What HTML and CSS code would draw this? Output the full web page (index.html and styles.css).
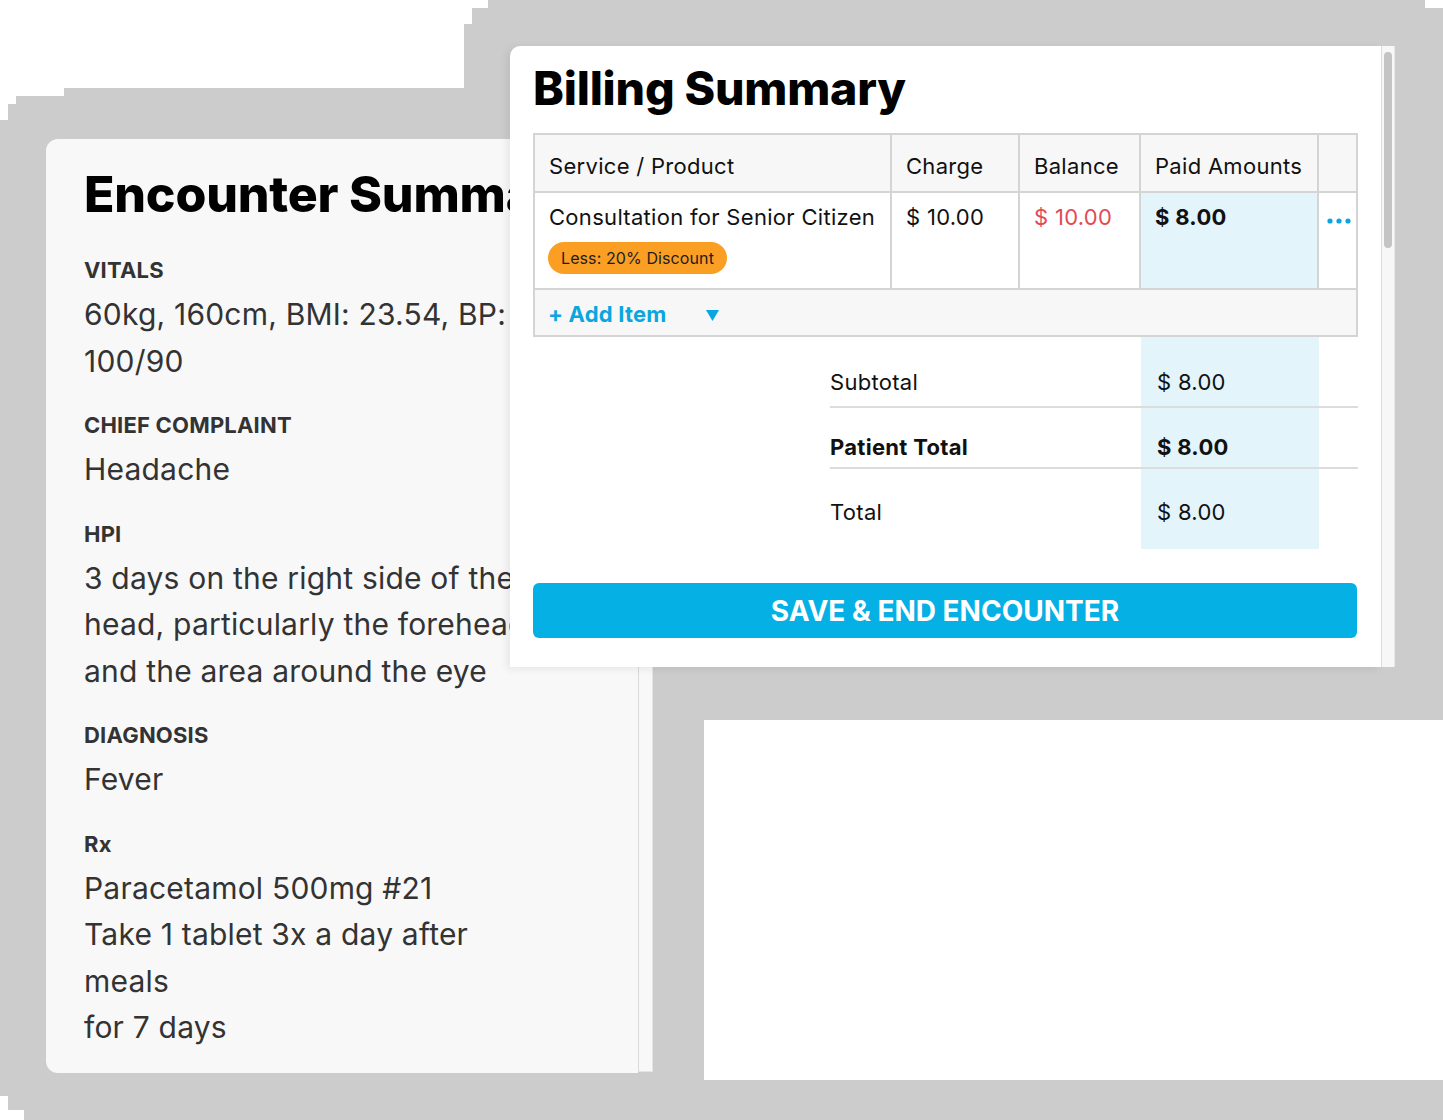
FILE: index.html
```html
<!DOCTYPE html>
<html lang="en">
<head>
<meta charset="utf-8">
<title>Encounter &amp; Billing Summary</title>
<link rel="stylesheet" href="styles.css">
</head>
<body>
<div class="stage">
  <svg class="backdrop" width="1443" height="1120" viewBox="0 0 1443 1120" aria-hidden="true">
    <polygon fill="#cccccc" points="488,0 1425,0 1425,8 1443,8 1443,720 704,720 704,1080 1443,1080 1443,1120 24,1120 24,1110 8,1110 8,1096 0,1096 0,120 8,120 8,104 16,104 16,96 64,96 64,88 464,88 464,24 472,24 472,8 488,8"/>
  </svg>

  <section class="card encounter">
    <div class="encounter-body">
      <h1 class="title">Encounter Summary</h1>
      <div class="field">
        <h2 class="label">VITALS</h2>
        <p class="value">60kg, 160cm, BMI: 23.54, BP: 100/90</p>
      </div>
      <div class="field">
        <h2 class="label">CHIEF COMPLAINT</h2>
        <p class="value">Headache</p>
      </div>
      <div class="field">
        <h2 class="label">HPI</h2>
        <p class="value">3 days on the right side of the head, particularly the forehead and the area around the eye</p>
      </div>
      <div class="field">
        <h2 class="label">DIAGNOSIS</h2>
        <p class="value">Fever</p>
      </div>
      <div class="field">
        <h2 class="label">Rx</h2>
        <p class="value">Paracetamol 500mg #21<br>Take 1 tablet 3x a day after meals<br>for 7 days</p>
      </div>
    </div>
    <div class="track"></div>
  </section>

  <section class="card billing">
    <div class="billing-body">
      <h1 class="title">Billing Summary</h1>

      <div class="bill-table">
        <div class="cell head">Service / Product</div>
        <div class="cell head">Charge</div>
        <div class="cell head">Balance</div>
        <div class="cell head">Paid Amounts</div>
        <div class="cell head"></div>

        <div class="cell body">
          <div>Consultation for Senior Citizen</div>
          <span class="pill">Less: 20% Discount</span>
        </div>
        <div class="cell body">$ 10.00</div>
        <div class="cell body due">$ 10.00</div>
        <div class="cell body paid"><strong>$ 8.00</strong></div>
        <div class="cell body more">
          <svg width="24" height="6" viewBox="0 0 24 6" aria-hidden="true">
            <circle cx="3" cy="3" r="2.6" fill="#0aa6df"/>
            <circle cx="12" cy="3" r="2.6" fill="#0aa6df"/>
            <circle cx="21" cy="3" r="2.6" fill="#0aa6df"/>
          </svg>
        </div>

        <div class="cell add-row">
          <span class="add-link">+ Add Item</span>
          <svg class="caret" width="13" height="11" viewBox="0 0 13 11" aria-hidden="true">
            <polygon points="0,0 13,0 6.5,11" fill="#0aa6df"/>
          </svg>
        </div>
      </div>

      <div class="summary">
        <div class="sum-row first">
          <div class="sum-label">Subtotal</div>
          <div class="sum-value">$ 8.00</div>
          <div class="sum-pad"></div>
        </div>
        <div class="sum-row second strong">
          <div class="sum-label">Patient Total</div>
          <div class="sum-value">$ 8.00</div>
          <div class="sum-pad"></div>
        </div>
        <div class="sum-row third">
          <div class="sum-label">Total</div>
          <div class="sum-value">$ 8.00</div>
          <div class="sum-pad"></div>
        </div>
      </div>

      <button class="cta" type="button">SAVE &amp; END ENCOUNTER</button>
    </div>
    <div class="track"><div class="thumb"></div></div>
  </section>
</div>
</body>
</html>
```

FILE: styles.css
```css
* { box-sizing: border-box; }

html, body {
  margin: 0;
  padding: 0;
  background: #ffffff;
}

body {
  font-family: "Inter", "Noto Sans", "DejaVu Sans", sans-serif;
  color: #111111;
}

.stage {
  position: relative;
  width: 1443px;
  height: 1120px;
  overflow: hidden;
}

.backdrop {
  position: absolute;
  left: 0;
  top: 0;
  display: block;
}

.card {
  position: absolute;
  display: flex;
}

/* ---------- Encounter summary ---------- */
.encounter {
  left: 46px;
  top: 139px;
  width: 607px;
  height: 934px;
}

.encounter-body {
  width: 592px;
  height: 100%;
  background: #f8f8f8;
  border-radius: 12px 0 0 12px;
  padding: 27px 0 0 38px;
  display: flex;
  flex-direction: column;
  gap: 27px;
}

.encounter .track {
  width: 15px;
  height: 933px;
  background: #f8f8f8;
  border-left: 1px solid #d9d9d9;
  border-right: 1px solid #e4e4e4;
  border-bottom: 1px solid #e4e4e4;
}

.title {
  margin: 0;
  line-height: 56px;
  font-weight: 800;
  color: #000;
  white-space: nowrap;
}

.encounter .title {
  font-size: 50px;
  margin-bottom: 7px;
  letter-spacing: -0.2px;
}

.field {
  display: flex;
  flex-direction: column;
  gap: 7px;
}

.label {
  margin: 0;
  font-size: 22px;
  line-height: 28px;
  font-weight: 700;
  color: #333333;
  letter-spacing: 0.2px;
}

.value {
  margin: 0;
  max-width: 460px;
  font-size: 30px;
  line-height: 46.5px;
  font-weight: 400;
  color: #333333;
  letter-spacing: 0.2px;
}

/* ---------- Billing summary ---------- */
.billing {
  left: 510px;
  top: 46px;
  width: 885px;
  height: 621px;
}

.billing-body {
  width: 871px;
  height: 100%;
  background: #ffffff;
  border-radius: 10px 0 0 0;
  padding: 14px 23px 0 23px;
  box-shadow: -3px 2px 8px rgba(0, 0, 0, 0.08);
  display: flex;
  flex-direction: column;
}

.billing .title {
  font-size: 46.5px;
  letter-spacing: -0.2px;
  margin-bottom: 17px;
}

.billing .track {
  position: relative;
  width: 14px;
  height: 100%;
  background: #f7f7f7;
  border-left: 1px solid #dcdcdc;
  border-right: 1px solid #e6e6e6;
}

.thumb {
  position: absolute;
  left: 2px;
  top: 6px;
  width: 8px;
  height: 196px;
  border-radius: 4px;
  background: #c4c4c4;
}

.bill-table {
  display: grid;
  grid-template-columns: 357px 128px 121px 178px 39px;
  width: 825px;
  border-top: 2px solid #d4d4d4;
  border-left: 2px solid #d4d4d4;
  font-size: 22px;
  line-height: 28px;
  letter-spacing: 0.3px;
}

.cell {
  border-right: 2px solid #d4d4d4;
  border-bottom: 2px solid #d4d4d4;
  padding-left: 14px;
}

.cell.head {
  background: #f7f7f7;
  padding-top: 17px;
  padding-bottom: 11px;
  height: 58px;
  white-space: nowrap;
}

.cell.body {
  background: #ffffff;
  padding-top: 10px;
  height: 97px;
  white-space: nowrap;
}

.cell.due { color: #e24b55; }

.cell.paid { background: #e3f4fb; }

.cell.paid strong { font-weight: 700; }

.cell.more {
  padding-left: 8px;
  padding-top: 25px;
}

.cell.more svg { display: block; }

.pill {
  display: inline-block;
  margin-top: 11px;
  margin-left: -1px;
  height: 32px;
  padding: 0 13px;
  border-radius: 16px;
  background: #fb9e24;
  color: #1d1d1d;
  font-size: 16px;
  line-height: 32px;
  letter-spacing: 0.1px;
}

.cell.add-row {
  grid-column: 1 / -1;
  background: #f7f7f7;
  height: 47px;
  padding-top: 10px;
  padding-left: 13px;
  display: flex;
  align-items: flex-start;
}

.add-link {
  width: 158px;
  font-weight: 700;
  color: #0aa6df;
  white-space: nowrap;
  letter-spacing: 0.2px;
}

.caret {
  display: block;
  margin-top: 10px;
}

.summary {
  margin-left: 297px;
  width: 528px;
  display: flex;
  flex-direction: column;
  font-size: 22px;
  line-height: 28px;
  letter-spacing: 0.3px;
}

.sum-row {
  display: grid;
  grid-template-columns: 311px 178px 39px;
}

.sum-row > div {
  white-space: nowrap;
}

.sum-row.first > div {
  padding-top: 31px;
  padding-bottom: 10px;
  border-bottom: 2px solid #dcdcdc;
}

.sum-row.second > div {
  padding-top: 25px;
  padding-bottom: 6px;
  border-bottom: 2px solid #dcdcdc;
}

.sum-row.third > div {
  padding-top: 29px;
  padding-bottom: 23px;
}

.sum-row.strong { font-weight: 700; }

.sum-value {
  background: #e3f4fb;
  padding-left: 16px;
}

.cta {
  margin-top: 34px;
  width: 824px;
  height: 55px;
  border: 0;
  border-radius: 6px;
  background: #05b0e5;
  color: #ffffff;
  font-family: inherit;
  font-size: 28px;
  font-weight: 700;
  padding: 0;
  cursor: pointer;
}
```
